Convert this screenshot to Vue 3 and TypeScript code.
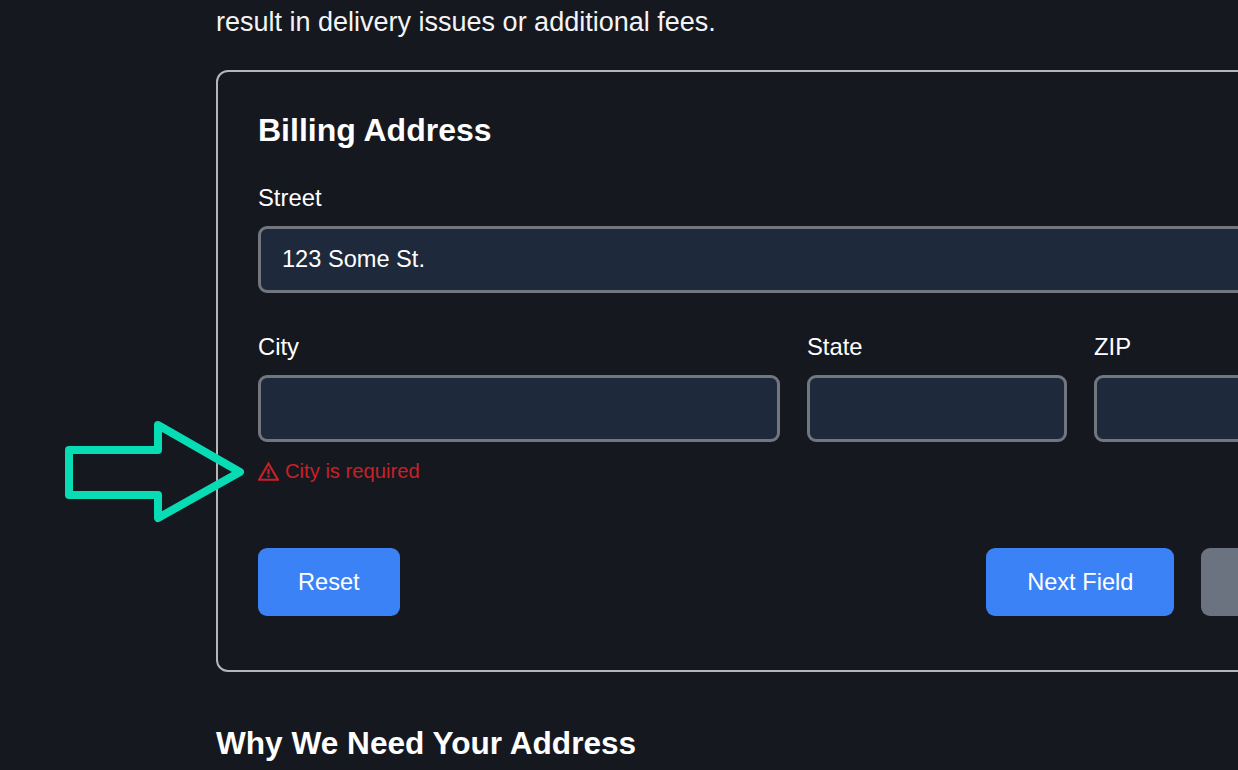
<script setup lang="ts">
const small = [
  { label: 'State', cls: 'state' },
  { label: 'ZIP', cls: 'zip' },
]
</script>

<template>
  <main class="page">
    <p class="intro">result in delivery issues or additional fees.</p>
    <section class="card">
      <h2 class="title">Billing Address</h2>
      <div class="field">
        <label class="label">Street</label>
        <input class="input" type="text" value="123 Some St." />
      </div>
      <div class="row">
        <div class="field">
          <label class="label">City</label>
          <input class="input" type="text" />
          <div class="error">
            <svg class="warn" viewBox="0 0 20 20" fill="none" aria-hidden="true">
              <path d="M10 2.4 18.9 17.8H1.1Z" stroke="currentColor" stroke-width="2" stroke-linejoin="miter" />
              <path d="M10 7.4v5.2" stroke="currentColor" stroke-width="2.2" />
              <path d="M10 13.7v2" stroke="currentColor" stroke-width="2.2" />
            </svg>
            <span>City is required</span>
          </div>
        </div>
        <div v-for="f in small" :key="f.cls" class="field">
          <label class="label">{{ f.label }}</label>
          <input class="input" type="text" />
        </div>
      </div>
      <div class="actions">
        <button class="btn reset" type="button">Reset</button>
        <div class="right">
          <button class="btn next" type="button">Next Field</button>
          <button class="btn muted" type="button">Submit</button>
        </div>
      </div>
    </section>
    <h3 class="why">Why We Need Your Address</h3>
  </main>
  <svg class="arrow" viewBox="0 0 190 110" fill="none" aria-hidden="true">
    <path d="M4 29H93V4L175 51 93 97V74H4Z" stroke="#07dcb5" stroke-width="8" stroke-linejoin="round" />
  </svg>
</template>

<style>
html, body {
  margin: 0;
  height: 770px;
  overflow: hidden;
  background: #16181f;
}
</style>

<style scoped>
.page {
  box-sizing: border-box;
  width: 1180px;
  margin-left: 216px;
  padding-top: 2px;
  font-family: "Liberation Sans", Arial, sans-serif;
  color: #fff;
}
.intro {
  margin: 0 0 28px;
  font-size: 27px;
  line-height: 40px;
  color: #f3f4f6;
}
.card {
  box-sizing: border-box;
  width: 1180px;
  height: 602px;
  padding: 38px 40px 0;
  border: 2px solid #b4b6bc;
  border-radius: 12px;
}
.title {
  margin: 0 0 32px;
  font-size: 32px;
  line-height: 40px;
  font-weight: 700;
}
.field {
  display: flex;
  flex-direction: column;
  min-width: 0;
}
.label {
  font-size: 23.8px;
  line-height: 32px;
  margin-bottom: 12px;
}
.input {
  box-sizing: border-box;
  width: 100%;
  height: 67px;
  padding: 0 21px;
  background: #1e293b;
  border: 3px solid #72767f;
  border-radius: 9px;
  color: #fff;
  font: 23.6px "Liberation Sans", Arial, sans-serif;
  outline: none;
}
.row {
  display: grid;
  grid-template-columns: 522px 260px 260px;
  gap: 27px;
  margin-top: 38px;
}
.error {
  display: flex;
  align-items: center;
  gap: 6px;
  height: 26px;
  margin-top: 16px;
  color: #c92028;
  font-size: 20.2px;
}
.warn {
  width: 21px;
  height: 21px;
  flex: none;
}
.actions {
  display: flex;
  justify-content: space-between;
  margin-top: 64px;
}
.right {
  display: flex;
  gap: 27px;
}
.btn {
  height: 68px;
  padding: 0 40px;
  border: 0;
  border-radius: 9px;
  background: #3b82f6;
  color: #fff;
  font: 23.6px "Liberation Sans", Arial, sans-serif;
}
.next {
  padding: 0 41px;
}
.muted {
  padding: 0 39.6px;
  background: #6b7280;
}
.why {
  margin: 51px 0 0;
  font-size: 31.6px;
  line-height: 40px;
  font-weight: 700;
}
.arrow {
  position: absolute;
  left: 65px;
  top: 421px;
  width: 190px;
  height: 110px;
}
</style>
